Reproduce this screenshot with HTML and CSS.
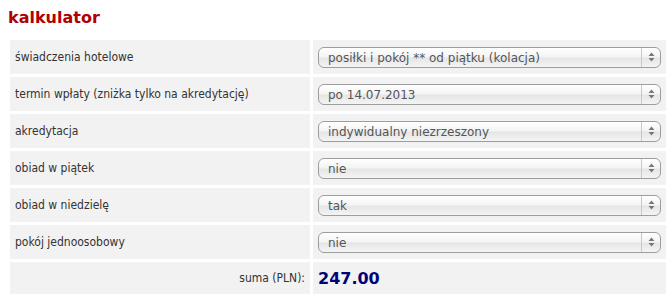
FILE: index.html
```html
<!DOCTYPE html>
<html>
<head>
    <title>kalkulator</title>
    <link rel="stylesheet" href="styles.css">
</head>
<body>
    <h1>kalkulator</h1>

    <div class="calc">
        <div class="label">świadczenia hotelowe</div>
        <div class="field">
            <div class="select">
                <select><option>posiłki i pokój ** od piątku (kolacja)</option></select>
                <span class="arrows"><svg width="7" height="10" viewBox="0 0 7 10"><path d="M3.5 0.5 L6.5 4 L0.5 4 Z M3.5 9.5 L6.5 6 L0.5 6 Z" fill="#777"/></svg></span>
            </div>
        </div>

        <div class="label">termin wpłaty (zniżka tylko na akredytację)</div>
        <div class="field">
            <div class="select">
                <select><option>po 14.07.2013</option></select>
                <span class="arrows"><svg width="7" height="10" viewBox="0 0 7 10"><path d="M3.5 0.5 L6.5 4 L0.5 4 Z M3.5 9.5 L6.5 6 L0.5 6 Z" fill="#777"/></svg></span>
            </div>
        </div>

        <div class="label">akredytacja</div>
        <div class="field">
            <div class="select">
                <select><option>indywidualny niezrzeszony</option></select>
                <span class="arrows"><svg width="7" height="10" viewBox="0 0 7 10"><path d="M3.5 0.5 L6.5 4 L0.5 4 Z M3.5 9.5 L6.5 6 L0.5 6 Z" fill="#777"/></svg></span>
            </div>
        </div>

        <div class="label">obiad w piątek</div>
        <div class="field">
            <div class="select">
                <select><option>nie</option></select>
                <span class="arrows"><svg width="7" height="10" viewBox="0 0 7 10"><path d="M3.5 0.5 L6.5 4 L0.5 4 Z M3.5 9.5 L6.5 6 L0.5 6 Z" fill="#777"/></svg></span>
            </div>
        </div>

        <div class="label">obiad w niedzielę</div>
        <div class="field">
            <div class="select">
                <select><option>tak</option></select>
                <span class="arrows"><svg width="7" height="10" viewBox="0 0 7 10"><path d="M3.5 0.5 L6.5 4 L0.5 4 Z M3.5 9.5 L6.5 6 L0.5 6 Z" fill="#777"/></svg></span>
            </div>
        </div>

        <div class="label">pokój jednoosobowy</div>
        <div class="field">
            <div class="select">
                <select><option>nie</option></select>
                <span class="arrows"><svg width="7" height="10" viewBox="0 0 7 10"><path d="M3.5 0.5 L6.5 4 L0.5 4 Z M3.5 9.5 L6.5 6 L0.5 6 Z" fill="#777"/></svg></span>
            </div>
        </div>

        <div class="label sum-label">suma (PLN):</div>
        <div class="field sum">247.00</div>
    </div>
</body>
</html>
```

FILE: styles.css
```css
body {
    font-family: "DejaVu Sans", Verdana, sans-serif;
    margin: 0;
    padding: 0 8px;
    background-color: #ffffff;
    color: #333333;
}

h1 {
    margin: 0;
    padding-top: 8px;
    height: 40px;
    box-sizing: border-box;
    font-size: 16px;
    line-height: 19px;
    color: #b20000;
}

.calc {
    display: grid;
    grid-template-columns: 300px 353px;
    grid-template-rows: repeat(6, 34px) 32px;
    gap: 3px;
    margin-left: 2px;
}

.label,
.field {
    background-color: #f2f2f2;
    display: flex;
    align-items: center;
}

.label {
    padding-left: 5px;
    font-family: "DejaVu Sans Condensed", "DejaVu Sans", sans-serif;
    font-stretch: condensed;
    font-size: 12px;
}

.field {
    padding-left: 5px;
}

.select {
    position: relative;
    width: 343px;
    height: 21px;
}

select {
    -webkit-appearance: none;
    appearance: none;
    width: 100%;
    height: 21px;
    margin: 0;
    padding: 0 30px 0 9px;
    border: 1px solid #9d9d9d;
    border-radius: 6px;
    background: linear-gradient(#ffffff, #f4f4f4 45%, #e6e6e6 55%, #f4f4f4);
    font-family: "DejaVu Sans", Verdana, sans-serif;
    font-size: 12px;
    color: #555555;
    box-shadow: inset 0 1px 0 #ffffff;
}

.arrows {
    position: absolute;
    top: 1px;
    right: 1px;
    width: 18px;
    height: 19px;
    border-left: 1px solid #c8c8c8;
    display: flex;
    align-items: center;
    justify-content: center;
    pointer-events: none;
}

.sum-label {
    justify-content: flex-end;
    padding-right: 5px;
}

.sum {
    font-size: 16px;
    font-weight: bold;
    color: #00007a;
}
```
